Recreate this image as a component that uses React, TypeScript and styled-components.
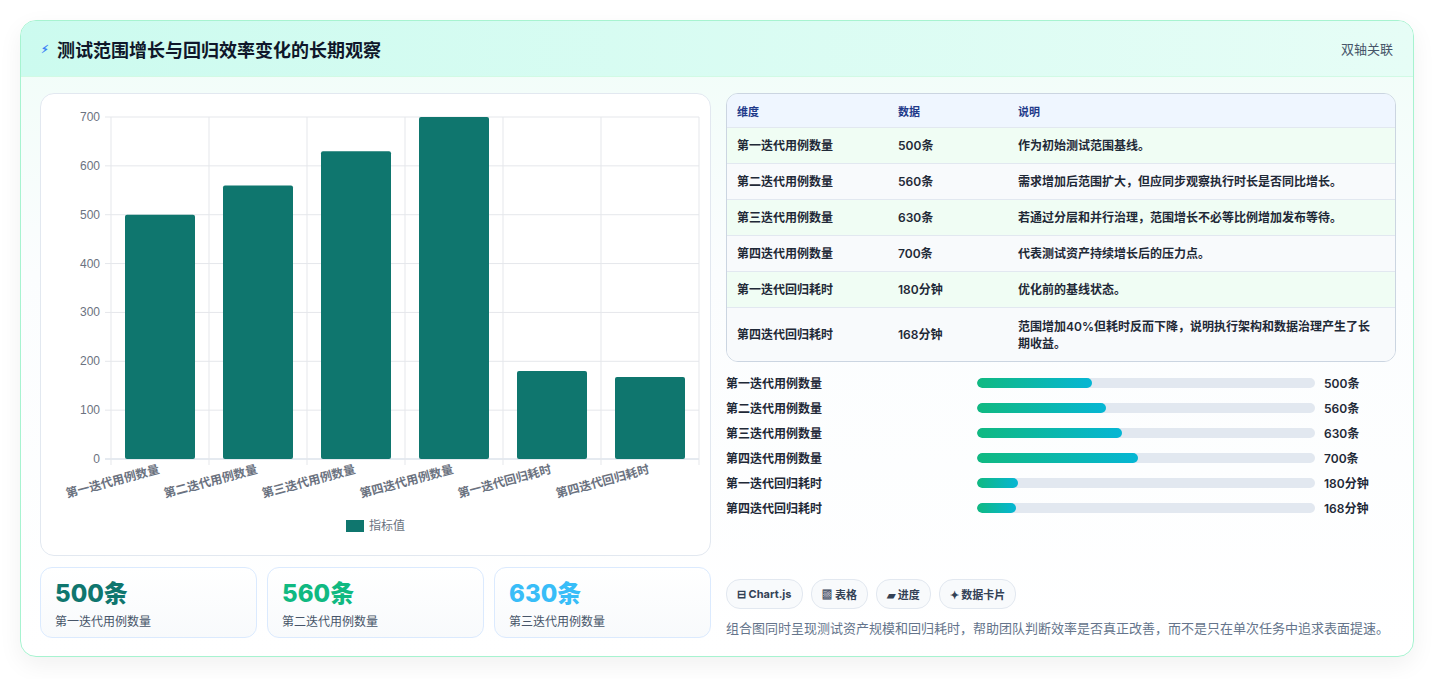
import React from "react";
import styled, { createGlobalStyle } from "styled-components";

const G = createGlobalStyle`
  body{margin:0;background:#f3f4f6;font-family:Inter,"Noto Sans CJK SC",sans-serif;}
`;
const Page = styled.div`padding:20px 21px 22px 20px;background:#fff;`;
const Card = styled.div`border:1px solid #a7f3d0;border-radius:16px;overflow:hidden;background:linear-gradient(180deg,#f0fdf8,#fbfdfe 40%,#fff);box-shadow:0 8px 24px rgba(0,0,0,.06);`;
const Header = styled.div`height:55px;display:flex;align-items:center;justify-content:space-between;padding:0 20px;background:linear-gradient(90deg,#ccfbef,#e6fdf6);border-bottom:1px solid #d1fae5;`;
const Title = styled.h1`margin:0;font-size:18px;font-weight:700;color:#0f172a;display:flex;align-items:center;gap:8px;`;
const Tag = styled.span`font-size:13px;color:#475569;`;
const Body = styled.div`display:grid;grid-template-columns:671px 670px;gap:15px;padding:16px 19px 18px 19px;`;
const Col = styled.div`display:flex;flex-direction:column;`;
const ChartBox = styled.div`height:461px;border:1px solid #e2e8f0;border-radius:14px;background:#fff;`;
const Stats = styled.div`display:grid;grid-template-columns:repeat(3,1fr);gap:10px;margin-top:11px;`;
const Stat = styled.div`height:71px;border:1px solid #dbeafe;border-radius:12px;background:linear-gradient(180deg,#fff,#f8fafc);padding:10px 14px;box-sizing:border-box;`;
const StatNum = styled.div<{c:string}>`font-size:24px;font-weight:800;color:${p=>p.c};line-height:32px;`;
const StatLbl = styled.div`font-size:12px;color:#475569;margin-top:2px;`;
const Table = styled.div`border:1px solid #cbd5e1;border-radius:12px;overflow:hidden;`;
const Row = styled.div<{bg:string;h:number}>`display:grid;grid-template-columns:161px 120px 1fr;min-height:${p=>p.h}px;align-items:center;background:${p=>p.bg};border-top:1px solid #e2e8f0;font-size:12px;font-weight:600;color:#1f2937;padding-left:10px;&:first-child{border-top:none;}`;
const Cell = styled.div`padding:6px 20px 6px 0;line-height:17px;`;
const HCell = styled.div`color:#1e3a8a;font-weight:700;font-size:11px;`;
const Bars = styled.div`display:flex;flex-direction:column;gap:9px;margin-top:12px;`;
const BarRow = styled.div`display:grid;grid-template-columns:251px 347px 1fr;align-items:center;gap:0;font-size:12px;font-weight:600;color:#1f2937;height:16px;`;
const Track = styled.div`height:10px;border-radius:5px;background:#e2e8f0;overflow:hidden;margin-right:9px;`;
const Fill = styled.div`height:100%;border-radius:5px;background:linear-gradient(90deg,#10b981,#06b6d4);`;
const Chips = styled.div`display:flex;gap:8px;margin-top:auto;`;
const Chip = styled.span`height:28px;padding:0 10px;display:inline-flex;align-items:center;border:1px solid #e2e8f0;border-radius:14px;background:#f8fafc;font-size:11px;font-weight:700;color:#334155;gap:3px;`;
const Note = styled.p`margin:9px 0 1px;font-size:13px;color:#64748b;`;

const cats=["第一迭代用例数量","第二迭代用例数量","第三迭代用例数量","第四迭代用例数量","第一迭代回归耗时","第四迭代回归耗时"];
const vals=[500,560,630,700,180,168];
const units=["条","条","条","条","分钟","分钟"];
const rows=[["作为初始测试范围基线。"],["需求增加后范围扩大，但应同步观察执行时长是否同比增长。"],["若通过分层和并行治理，范围增长不必等比例增加发布等待。"],["代表测试资产持续增长后的压力点。"],["优化前的基线状态。"],["范围增加40%但耗时反而下降，说明执行架构和数据治理产生了长期收益。"]];

function Chart(){
  const x0=70,y0=365,w=588,h=342,step=w/6;
  return <svg width="670" height="461" viewBox="0 0 670 461" style={{display:"block"}}>
    {[0,1,2,3,4,5,6,7].map(i=>{const y=y0-i*h/7;return <g key={i}>
      <line x1={x0-6} x2={x0+w} y1={y} y2={y} stroke={i===0?"#cbd5e1":"#e5e7eb"}/>
      <text x={x0-11} y={y+4} textAnchor="end" fontSize="12" fill="#6b7280" fontFamily="Liberation Sans">{i*100}</text></g>})}
    {[0,1,2,3,4,5,6].map(i=><line key={i} x1={x0+i*step} x2={x0+i*step} y1={y0-h} y2={y0+6} stroke="#e5e7eb"/>)}
    {vals.map((v,i)=>{const bh=v/700*h;return <rect key={i} x={x0+i*step+14} y={y0-bh} width={70} height={bh} rx="2" fill="#0f766e"/>})}
    {cats.map((c,i)=><text key={i} transform={`translate(${x0+i*step+49},${y0+14}) rotate(-15)`} textAnchor="end" fontSize="12" fontWeight="600" fill="#6b7280">{c}</text>)}
    <rect x="305" y="426" width="18" height="12" fill="#0f766e"/>
    <text x="328" y="436" fontSize="12" fill="#6b7280">指标值</text>
  </svg>;
}

export default function App(){
  return <Page><G/><Card>
    <Header><Title><span style={{color:"#3b82f6",fontSize:11}}>⚡︎</span>测试范围增长与回归效率变化的长期观察</Title><Tag>双轴关联</Tag></Header>
    <Body>
      <Col>
        <ChartBox><Chart/></ChartBox>
        <Stats>
          <Stat><StatNum c="#0f766e">500条</StatNum><StatLbl>第一迭代用例数量</StatLbl></Stat>
          <Stat><StatNum c="#10b981">560条</StatNum><StatLbl>第二迭代用例数量</StatLbl></Stat>
          <Stat><StatNum c="#38bdf8">630条</StatNum><StatLbl>第三迭代用例数量</StatLbl></Stat>
        </Stats>
      </Col>
      <Col>
        <Table>
          <Row bg="#eff6ff" h={33}><HCell>维度</HCell><HCell>数据</HCell><HCell>说明</HCell></Row>
          {cats.map((c,i)=><Row key={i} bg={i%2?"#f8fafc":"#f0fdf4"} h={i===5?53:35}><Cell>{c}</Cell><Cell>{vals[i]}{units[i]}</Cell><Cell>{rows[i][0]}</Cell></Row>)}
        </Table>
        <Bars>
          {cats.map((c,i)=><BarRow key={i}><span>{c}</span><Track><Fill style={{width:`${vals[i]/1470*100}%`}}/></Track><span>{vals[i]}{units[i]}</span></BarRow>)}
        </Bars>
        <Chips><Chip>⊟ Chart.js</Chip><Chip>▩ 表格</Chip><Chip>▰ 进度</Chip><Chip>✦ 数据卡片</Chip></Chips>
        <Note>组合图同时呈现测试资产规模和回归耗时，帮助团队判断效率是否真正改善，而不是只在单次任务中追求表面提速。</Note>
      </Col>
    </Body>
  </Card></Page>;
}
